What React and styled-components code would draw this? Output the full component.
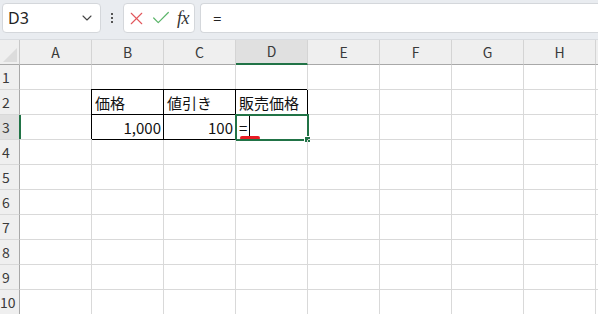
import React from "react";
import styled, { createGlobalStyle } from "styled-components";
import { ChevronDown, X, Check } from "lucide-react";

const GlobalStyle = createGlobalStyle`
  html, body {
    margin: 0;
    padding: 0;
    background: #ffffff;
    overflow: hidden;
  }
  body {
    font-family: "Noto Sans CJK JP", "Noto Sans", sans-serif;
  }
`;

const COL_W = 72;
const ROW_H = 25;
const GREEN = "#217346";

const Page = styled.div`
  width: 598px;
  height: 314px;
  display: flex;
  flex-direction: column;
  overflow: hidden;
`;

const Toolbar = styled.div`
  height: 40px;
  flex: none;
  display: flex;
  align-items: flex-start;
  padding: 3px 0 0 2px;
  box-sizing: border-box;
  background: #e9ecf0;
  border-bottom: 1px solid #d9dce0;
`;

const Box = styled.div`
  height: 30px;
  box-sizing: border-box;
  background: #ffffff;
  border: 1px solid #d4d7db;
  border-radius: 4px;
  display: flex;
  align-items: center;
`;

const NameBox = styled(Box)`
  width: 99px;
  padding: 0 5px 0 5px;
  justify-content: space-between;
  font-family: "Noto Sans", "Liberation Sans", sans-serif;
  font-size: 16px;
  color: #222;
  svg {
    color: #444;
  }
`;

const Dots = styled.div`
  width: 22px;
  height: 30px;
  display: flex;
  flex-direction: column;
  align-items: center;
  justify-content: center;
  gap: 2px;
  span {
    width: 2px;
    height: 2px;
    background: #555;
  }
`;

const FuncBox = styled(Box)`
  width: 72px;
  padding: 0 2px 0 2px;
  gap: 3px;
`;

const Fx = styled.span`
  font-family: "Liberation Serif", serif;
  font-style: italic;
  font-size: 18px;
  color: #333;
  margin-left: 2px;
  letter-spacing: -0.5px;
`;

const FormulaBox = styled(Box)`
  flex: 1;
  margin-left: 5px;
  border-right: none;
  border-radius: 4px 0 0 4px;
  padding-left: 12px;
  font-family: "Noto Sans", "Liberation Sans", sans-serif;
  font-size: 15px;
  color: #222;
`;

const Grid = styled.div`
  display: grid;
  grid-template-columns: 20px repeat(9, ${COL_W}px);
  grid-auto-rows: ${ROW_H}px;
  background: #ffffff;
`;

const Corner = styled.div`
  position: relative;
  background: #efefef;
  border-right: 1px solid #c8c8c8;
  border-bottom: 1px solid #a8a8a8;
  overflow: hidden;
  &::after {
    content: "";
    position: absolute;
    right: 2px;
    bottom: 2px;
    border-style: solid;
    border-width: 0 0 14px 14px;
    border-color: transparent transparent #dcdcdc transparent;
  }
`;

const ColHead = styled.div`
  background: ${({ $active }) => ($active ? "#e0e0e0" : "#efefef")};
  border-right: 1px solid #d4d4d4;
  border-bottom: ${({ $active }) =>
    $active ? `2px solid ${GREEN}` : "1px solid #a8a8a8"};
  display: flex;
  align-items: center;
  justify-content: center;
  font-size: 14px;
  color: #3a3a3a;
  padding-bottom: 1px;
`;

const RowHead = styled.div`
  background: ${({ $active }) => ($active ? "#e0e0e0" : "#efefef")};
  border-right: ${({ $active }) =>
    $active ? `2px solid ${GREEN}` : "1px solid #a8a8a8"};
  margin-right: ${({ $active }) => ($active ? "-1px" : "0")};
  border-bottom: 1px solid #d9d9d9;
  display: flex;
  align-items: center;
  font-size: 14px;
  color: #3a3a3a;
  span {
    width: 12px;
    text-align: center;
    white-space: nowrap;
  }
`;

const Cell = styled.div`
  position: relative;
  border-right: 1px solid ${({ $boxed }) => ($boxed ? "#000" : "#d9d9d9")};
  border-bottom: 1px solid ${({ $boxed }) => ($boxed ? "#000" : "#d9d9d9")};
  box-shadow: ${({ $boxed }) => ($boxed ? "-1px -1px 0 0 #000" : "none")};
  display: flex;
  align-items: center;
  justify-content: ${({ $align }) => ($align === "right" ? "flex-end" : "flex-start")};
  padding: 0 2px 0 3px;
  font-size: 15px;
  color: #111;
  white-space: nowrap;
`;

const Caret = styled.span`
  width: 1px;
  height: 24px;
  background: #000;
  margin-left: 2px;
`;

const Selection = styled.div`
  position: absolute;
  left: -1px;
  top: -1px;
  right: -2px;
  bottom: -2px;
  border: 2px solid ${GREEN};
  pointer-events: none;
`;

const Handle = styled.div`
  position: absolute;
  right: -4px;
  bottom: -4px;
  width: 5px;
  height: 5px;
  background: ${GREEN};
  border: 1px solid #ffffff;
`;

const Composition = styled.div`
  position: absolute;
  left: 4px;
  bottom: -1px;
  width: 20px;
  height: 4px;
  border-radius: 2px;
  background: #e81c24;
`;

const columns = ["A", "B", "C", "D", "E", "F", "G", "H", ""];

const data = {
  "2-1": { text: "価格", boxed: true },
  "2-2": { text: "値引き", boxed: true },
  "2-3": { text: "販売価格", boxed: true },
  "3-1": { text: "1,000", boxed: true, align: "right" },
  "3-2": { text: "100", boxed: true, align: "right" },
  "3-3": { boxed: true, editing: true },
};

const App = () => {
  const rows = Array.from({ length: 10 }, (_, i) => i + 1);
  return (
    <Page>
      <GlobalStyle />
      <Toolbar>
        <NameBox>
          <span>D3</span>
          <ChevronDown size={16} strokeWidth={1.6} />
        </NameBox>
        <Dots>
          <span />
          <span />
          <span />
        </Dots>
        <FuncBox>
          <X size={21} strokeWidth={1.3} color="#e2565b" />
          <Check size={22} strokeWidth={1.3} color="#5bb56a" />
          <Fx>fx</Fx>
        </FuncBox>
        <FormulaBox>=</FormulaBox>
      </Toolbar>
      <Grid>
        <Corner />
        {columns.map((c, i) => (
          <ColHead key={i} $active={c === "D"}>
            {c}
          </ColHead>
        ))}
        {rows.map((r) => (
          <React.Fragment key={r}>
            <RowHead $active={r === 3}>
              <span>{r}</span>
            </RowHead>
            {columns.map((c, ci) => {
              const d = data[`${r}-${ci}`] || {};
              return (
                <Cell key={ci} $boxed={d.boxed} $align={d.align}>
                  {d.text}
                  {d.editing && (
                    <>
                      =<Caret />
                      <Composition />
                      <Selection>
                        <Handle />
                      </Selection>
                    </>
                  )}
                </Cell>
              );
            })}
          </React.Fragment>
        ))}
      </Grid>
    </Page>
  );
};

export default App;
